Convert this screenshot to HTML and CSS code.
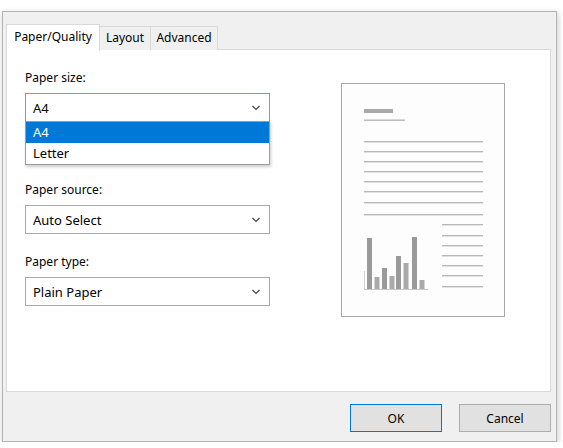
FILE: index.html
```html
<!DOCTYPE html>
<html lang="en">

<head>
    <meta charset="UTF-8">
    <meta name="viewport" content="width=device-width, initial-scale=1.0">
    <link rel="stylesheet" href="styles.css">
    <title>Printing Preferences</title>
</head>

<body>
    <div class="dialog">
        <div class="tabs">
            <div class="tab tab-active">Paper/Quality</div>
            <div class="tab tab-layout">Layout</div>
            <div class="tab tab-advanced">Advanced</div>
        </div>

        <div class="panel">
            <div class="fields">
                <div class="field field-size">
                    <label class="field-label">Paper size:</label>
                    <div class="combo combo-focus">
                        <span>A4</span>
                        <svg class="chevron" width="10" height="6" viewBox="0 0 10 6">
                            <polyline points="1.5,1 5,4.5 8.5,1" fill="none" stroke="#444" stroke-width="1.2" />
                        </svg>
                    </div>
                    <!-- open list of the paper size box -->
                    <div class="dropdown">
                        <div class="option option-selected">A4</div>
                        <div class="option">Letter</div>
                    </div>
                </div>

                <div class="field">
                    <label class="field-label">Paper source:</label>
                    <div class="combo">
                        <span>Auto Select</span>
                        <svg class="chevron" width="10" height="6" viewBox="0 0 10 6">
                            <polyline points="1.5,1 5,4.5 8.5,1" fill="none" stroke="#444" stroke-width="1.2" />
                        </svg>
                    </div>
                </div>

                <div class="field">
                    <label class="field-label">Paper type:</label>
                    <div class="combo">
                        <span>Plain Paper</span>
                        <svg class="chevron" width="10" height="6" viewBox="0 0 10 6">
                            <polyline points="1.5,1 5,4.5 8.5,1" fill="none" stroke="#444" stroke-width="1.2" />
                        </svg>
                    </div>
                </div>
            </div>

            <div class="preview">
                <svg width="162" height="232" viewBox="0 0 162 232">
                    <!-- heading -->
                    <rect x="22" y="25" width="29" height="4" fill="#a9a9a9" />
                    <rect x="22" y="35.5" width="41" height="1.4" fill="#b5b5b5" />
                    <!-- body text -->
                    <g fill="#b8b8b8">
                        <rect x="22" y="57" width="119" height="1.4" />
                        <rect x="22" y="67" width="119" height="1.4" />
                        <rect x="22" y="77" width="119" height="1.4" />
                        <rect x="22" y="87" width="119" height="1.4" />
                        <rect x="22" y="97" width="119" height="1.4" />
                        <rect x="22" y="107" width="119" height="1.4" />
                        <rect x="22" y="118" width="119" height="1.4" />
                        <rect x="22" y="130" width="119" height="1.4" />
                    </g>
                    <!-- text next to chart -->
                    <g fill="#b8b8b8">
                        <rect x="100" y="140" width="41" height="1.4" />
                        <rect x="100" y="151" width="41" height="1.4" />
                        <rect x="100" y="161" width="41" height="1.4" />
                        <rect x="100" y="171" width="41" height="1.4" />
                        <rect x="100" y="181" width="41" height="1.4" />
                        <rect x="100" y="191" width="41" height="1.4" />
                        <rect x="100" y="202" width="41" height="1.4" />
                    </g>
                    <!-- bar chart -->
                    <rect x="22" y="187" width="1" height="18" fill="#d0d0d0" />
                    <rect x="22" y="205" width="64" height="1" fill="#c8c8c8" />
                    <g fill="#9a9a9a">
                        <rect x="25" y="154" width="5" height="51" />
                        <rect x="32.5" y="193" width="5" height="12" fill="#aaa" />
                        <rect x="40" y="184" width="5" height="21" />
                        <rect x="47.5" y="192" width="5" height="13" fill="#aaa" />
                        <rect x="54" y="172" width="5" height="33" />
                        <rect x="61.5" y="179" width="5" height="26" fill="#aaa" />
                        <rect x="70" y="153" width="5" height="52" />
                        <rect x="77.5" y="196" width="5" height="9" fill="#aaa" />
                    </g>
                </svg>
            </div>
        </div>

        <div class="buttons">
            <button class="btn btn-default">OK</button>
            <button class="btn">Cancel</button>
        </div>
    </div>
</body>

</html>
```

FILE: styles.css
```css
* {
    box-sizing: border-box;
    margin: 0;
    padding: 0;
}

body {
    background-color: #ffffff;
    font-family: "Noto Sans", "Open Sans", sans-serif;
    font-size: 12px;
    color: #000;
}

.dialog {
    margin: 11px 0 0 2px;
    width: 555px;
    height: 431px;
    background-color: #f0f0f0;
    border: 1px solid #b4b4b4;
    box-shadow: 1px 2px 6px rgba(0, 0, 0, 0.22);
    padding: 11px 5px 0 3px;
    display: flex;
    flex-direction: column;
}

.tabs {
    display: flex;
    align-items: flex-end;
    height: 27px;
    margin-bottom: -1px;
    position: relative;
    z-index: 1;
}

.tab {
    height: 24px;
    line-height: 22px;
    text-align: center;
    border: 1px solid #d9d9d9;
    border-bottom: none;
    margin-left: -1px;
    background-color: #f0f0f0;
}

.tab-active {
    width: 94px;
    height: 27px;
    margin-left: 0;
    margin-bottom: -1px;
    line-height: 23px;
    background-color: #ffffff;
}

.tab-layout {
    width: 52px;
}

.tab-advanced {
    width: 68px;
}

.panel {
    height: 343px;
    background-color: #ffffff;
    border: 1px solid #d9d9d9;
    padding: 20px 0 0 18px;
    display: flex;
    align-items: flex-start;
}

.fields {
    width: 245px;
    display: flex;
    flex-direction: column;
}

.field {
    position: relative;
    margin-bottom: 20px;
}

.field-size {
    margin-bottom: 60px;
}

.field-label {
    display: block;
    line-height: 16px;
    margin-bottom: 7px;
}

.combo {
    height: 29px;
    border: 1px solid #a9a9a9;
    background-color: #ffffff;
    padding: 0 7px;
    font-size: 13px;
    display: flex;
    align-items: center;
    justify-content: space-between;
}

.combo-focus {
    border-color: #5fa0e0;
}

.chevron {
    margin-right: 1px;
}

.dropdown {
    position: absolute;
    left: 0;
    right: 0;
    top: 51px;
    background-color: #ffffff;
    border: 1px solid #9c9c9c;
    box-shadow: 1px 2px 3px rgba(0, 0, 0, 0.2);
    font-size: 13px;
}

.option {
    height: 21px;
    line-height: 21px;
    padding: 0 7px;
}

.option-selected {
    background-color: #0078d7;
    color: #ffffff;
}

.preview {
    margin: 13px 0 0 71px;
    width: 164px;
    height: 234px;
    border: 1px solid #a8a8a8;
    background-color: #fdfdfd;
}

.preview svg {
    display: block;
}

.buttons {
    display: flex;
    justify-content: flex-end;
    gap: 17px;
    padding-top: 12px;
}

.btn {
    width: 92px;
    height: 28px;
    background-color: #e1e1e1;
    border: 1px solid #adadad;
    font-family: "Noto Sans", "Open Sans", sans-serif;
    font-size: 12px;
    color: #000;
}

.btn-default {
    border-color: #0078d7;
}
```
